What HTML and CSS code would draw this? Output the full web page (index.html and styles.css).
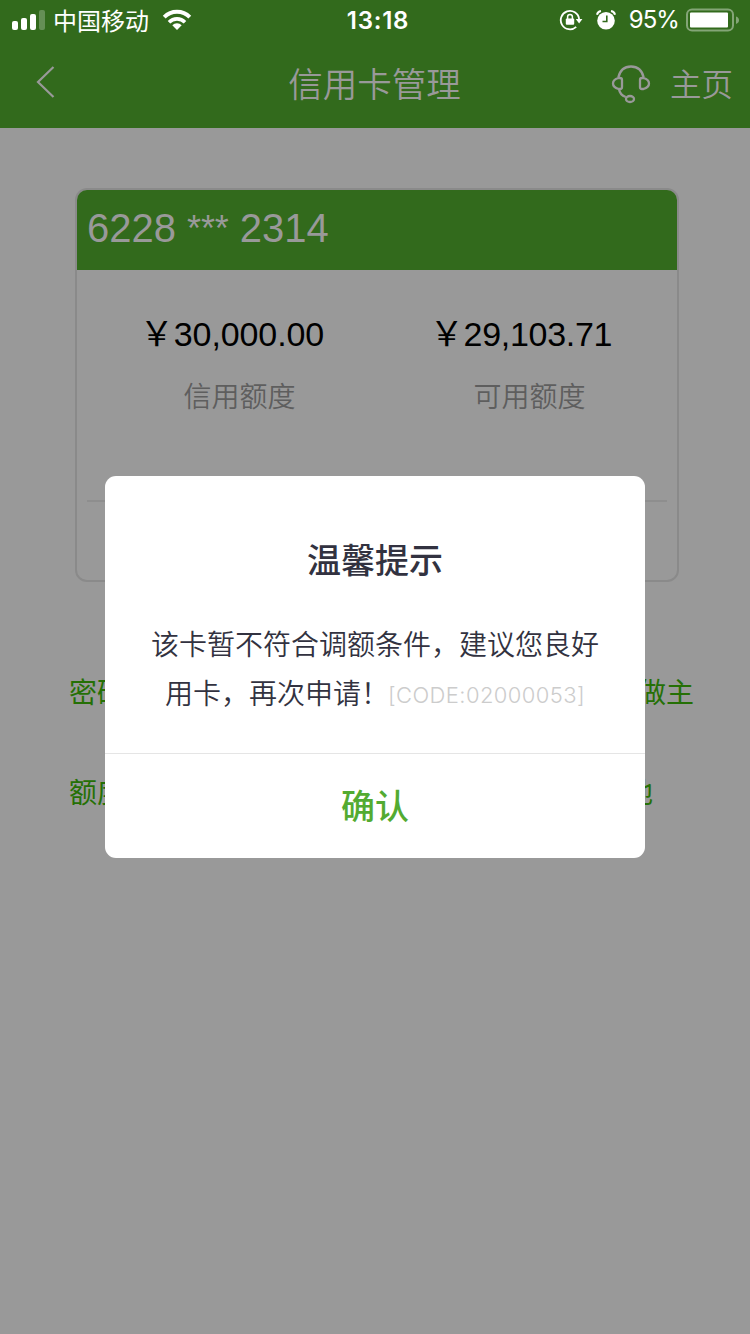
FILE: index.html
```html
<!DOCTYPE html>
<html lang="zh-CN">
<head>
<meta charset="utf-8">
<title>信用卡管理</title>
<link rel="stylesheet" href="styles.css">
</head>
<body>
<div class="screen">
  <header class="header">
    <div class="status">
      <div class="status-left">
        <svg class="signal" width="34" height="20" viewBox="0 0 34 20" fill="#fff">
          <rect x="0" y="11" width="6" height="9" rx="2"/>
          <rect x="9" y="8" width="6" height="12" rx="2"/>
          <rect x="18" y="4" width="6" height="16" rx="2"/>
          <rect x="27" y="0" width="6" height="20" rx="2" opacity=".25"/>
        </svg>
        <span class="carrier">中国移动</span>
        <svg class="wifi" width="30" height="22" viewBox="0 0 30 22" fill="none" stroke="#fff">
          <path d="M2.2 8.1a18.2 18.2 0 0 1 25.6 0" stroke-width="4"/>
          <path d="M7 13.2a11.4 11.4 0 0 1 16 0" stroke-width="3.6"/>
          <path d="M15 21l-4.7-4.8a6.7 6.7 0 0 1 9.4 0z" fill="#fff" stroke="none"/>
        </svg>
      </div>
      <div class="clock">13:18</div>
      <div class="status-right">
        <svg class="lock" width="24" height="22" viewBox="0 0 24 22" fill="none" stroke="#fff">
          <path d="M17.200 17.900A9.200 9.200 0 1 1 20.100 10" stroke-width="1.8"/>
          <path d="M16.800 10h6.600l-3.300 4.600z" fill="#fff" stroke="none"/>
          <rect x="6.800" y="9.500" width="8.400" height="6.200" rx="1" fill="#fff" stroke="none"/>
          <path d="M8.600 10V7.800a2.400 2.400 0 0 1 4.800 0V10" stroke-width="1.5"/>
        </svg>
        <svg class="alarm" width="20" height="20" viewBox="0 0 20 20" fill="none">
          <circle cx="10" cy="10.800" r="8.800" fill="#fff"/>
          <path d="M10.800 5.500v6H6.500" stroke="#326a1c" stroke-width="1.6"/>
          <path d="M1 4.800Q1.600 1.800 5 1.100M19 4.800Q18.400 1.800 15 1.100" stroke="#fff" stroke-width="2"/>
        </svg>
        <span class="percent">95%</span>
        <svg class="battery" width="54" height="24" viewBox="0 0 54 24">
          <rect x="1" y="1.500" width="46" height="21" rx="5" fill="none" stroke="#84a577" stroke-width="2"/>
          <rect x="4" y="4.500" width="38" height="15" rx="1" fill="#fff"/>
          <path d="M50 8.500q3 1 3 3.700t-3 3.700z" fill="#84a577"/>
        </svg>
      </div>
    </div>
    <nav class="nav">
      <svg class="back" width="20" height="32" viewBox="0 0 20 32" fill="none" stroke="#999" stroke-width="2.2"><path d="M17.500 1L2 16l15.500 15"/></svg>
      <h1 class="title">信用卡管理</h1>
      <div class="nav-right">
        <svg class="headset" width="40" height="40" viewBox="0 0 40 40" fill="none" stroke="#999" stroke-width="2.3">
          <path d="M7.300 13.500C9 6 13.500 2.500 20 2.500s11 3.500 12.700 11"/>
          <path d="M7.500 14h1.500q2 0 2 2v7q0 2-2 2H7.500C3.800 23.800 2 21.900 2 19.500s1.800-4.500 5.500-5.500z"/>
          <path d="M32.500 14H31q-2 0-2 2v7q0 2 2 2h1.500c3.700-1.200 5.500-3.100 5.500-5.500s-1.800-4.500-5.500-5.500z"/>
          <path d="M8 25c.600 4 2.700 6.600 6.700 8"/>
          <ellipse cx="19" cy="35" rx="4" ry="3"/>
        </svg>
        <span class="home">主页</span>
      </div>
    </nav>
  </header>

  <main class="content">
    <section class="card">
      <div class="card-number">6228 <span class="mask">***</span> 2314</div>
      <div class="limits">
        <div class="limit"><div class="amount">￥30,000.00</div><div class="label">信用额度</div></div>
        <div class="limit"><div class="amount amount-available">￥29,103.71</div><div class="label">可用额度</div></div>
      </div>
    </section>
    <div class="links"><span>密码</span><span>做主</span></div>
    <div class="links links-short"><span>额度</span><span>地</span></div>
  </main>

  <div class="dialog">
    <h2 class="dialog-title">温馨提示</h2>
    <p class="message">该卡暂不符合调额条件，建议您良好<br>用卡，再次申请！<span class="code">[CODE:02000053]</span></p>
    <div class="confirm">确认</div>
  </div>
</div>
</body>
</html>
```
FILE: styles.css
```css
* { box-sizing: border-box; }
body {
  margin: 0;
  font-family: "Liberation Sans", "Noto Sans CJK SC", sans-serif;
}
h1, h2, p { margin: 0; }
svg { display: block; flex: none; }
.screen {
  position: relative;
  width: 750px;
  height: 1334px;
  overflow: hidden;
  background: #999;
}
.header { height: 128px; background: #326a1c; }
.status {
  display: grid;
  grid-template-columns: 1fr auto 1fr;
  height: 40px;
  padding: 0 10px 0 12px;
  color: #fff;
  font-family: Inter, "Noto Sans CJK SC", sans-serif;
  font-size: 24px;
  line-height: 42px;
}
.status-left, .status-right { display: flex; align-items: center; height: 40px; }
.status-right { justify-content: flex-end; }
.carrier { margin-left: 7px; font-family: "Noto Sans CJK SC", sans-serif; line-height: 40px; }
.wifi { margin-left: 13px; }
.clock { font-weight: 600; letter-spacing: .8px; padding-left: 4px; }
.alarm { margin-left: 13px; }
.percent { margin-left: 13px; line-height: 44px; letter-spacing: -.9px; }
.battery { margin-left: 7px; }
.nav {
  display: grid;
  grid-template-columns: 1fr auto 1fr;
  align-items: center;
  height: 88px;
  padding: 0 17px 0 36px;
  color: #999;
  font-family: "Noto Sans CJK SC", sans-serif;
}
.back { margin-bottom: 5px; }
.title { margin-top: -3px; font-size: 34.500px; font-weight: 350; line-height: 85px; padding-right: 20px; }
.nav-right { display: flex; align-items: center; justify-content: flex-end; gap: 19px; }
.home { margin-top: -4px; font-size: 31.500px; font-weight: 350; line-height: 84px; }
.content { padding: 60px 71px 0 75px; }
.card {
  width: 604px;
  height: 394px;
  border: 2px solid #8a8a8a;
  border-radius: 12px;
  overflow: hidden;
}
.card-number {
  height: 80px;
  padding-left: 10px;
  background: #326a1c;
  color: #999;
  font-size: 40px;
  line-height: 77px;
}
.mask { font-size: 36px; line-height: 1; vertical-align: 1px; letter-spacing: -.2px; }
.limits {
  display: grid;
  grid-template-columns: 1fr 1fr;
  height: 232px;
  margin: 0 10px;
  padding-top: 39px;
  border-bottom: 2px solid #8e8e8e;
}
.limit { text-align: center; }
.amount { color: #000; font-size: 34px; line-height: 50px; letter-spacing: -.1px; }
.amount-available { padding-right: 2px; letter-spacing: -.3px; }
.label {
  margin-top: 15px;
  padding-left: 15px;
  color: #5e5e5e;
  font-size: 28px;
  font-weight: 350;
  line-height: 48px;
}
.links {
  display: flex;
  justify-content: space-between;
  height: 50px;
  margin: 50px -15px 0 -6px;
  color: #257005;
  font-size: 28px;
  line-height: 50px;
}
.card + .links { margin-top: 87px; }
.links-short { margin-right: 26px; }
.dialog {
  position: absolute;
  left: 105px;
  top: 476px;
  width: 540px;
  height: 382px;
  border-radius: 11px;
  background: #fff;
  color: #323240;
  text-align: center;
  font-family: "Noto Sans CJK SC", sans-serif;
}
.dialog-title { padding-top: 58px; font-size: 34px; font-weight: 500; line-height: 50px; }
.message {
  height: 169px;
  padding-top: 35px;
  font-size: 28px;
  font-weight: 350;
  line-height: 49px;
}
.code {
  margin-left: -1px;
  font-family: Inter, sans-serif;
  font-size: 22px;
  line-height: 1;
  vertical-align: 1px;
  letter-spacing: .4px;
  color: #ccc;
}
.confirm {
  border-top: 1px solid #e5e5e5;
  color: #53ab31;
  font-size: 34px;
  font-weight: 500;
  line-height: 102px;
}
```
